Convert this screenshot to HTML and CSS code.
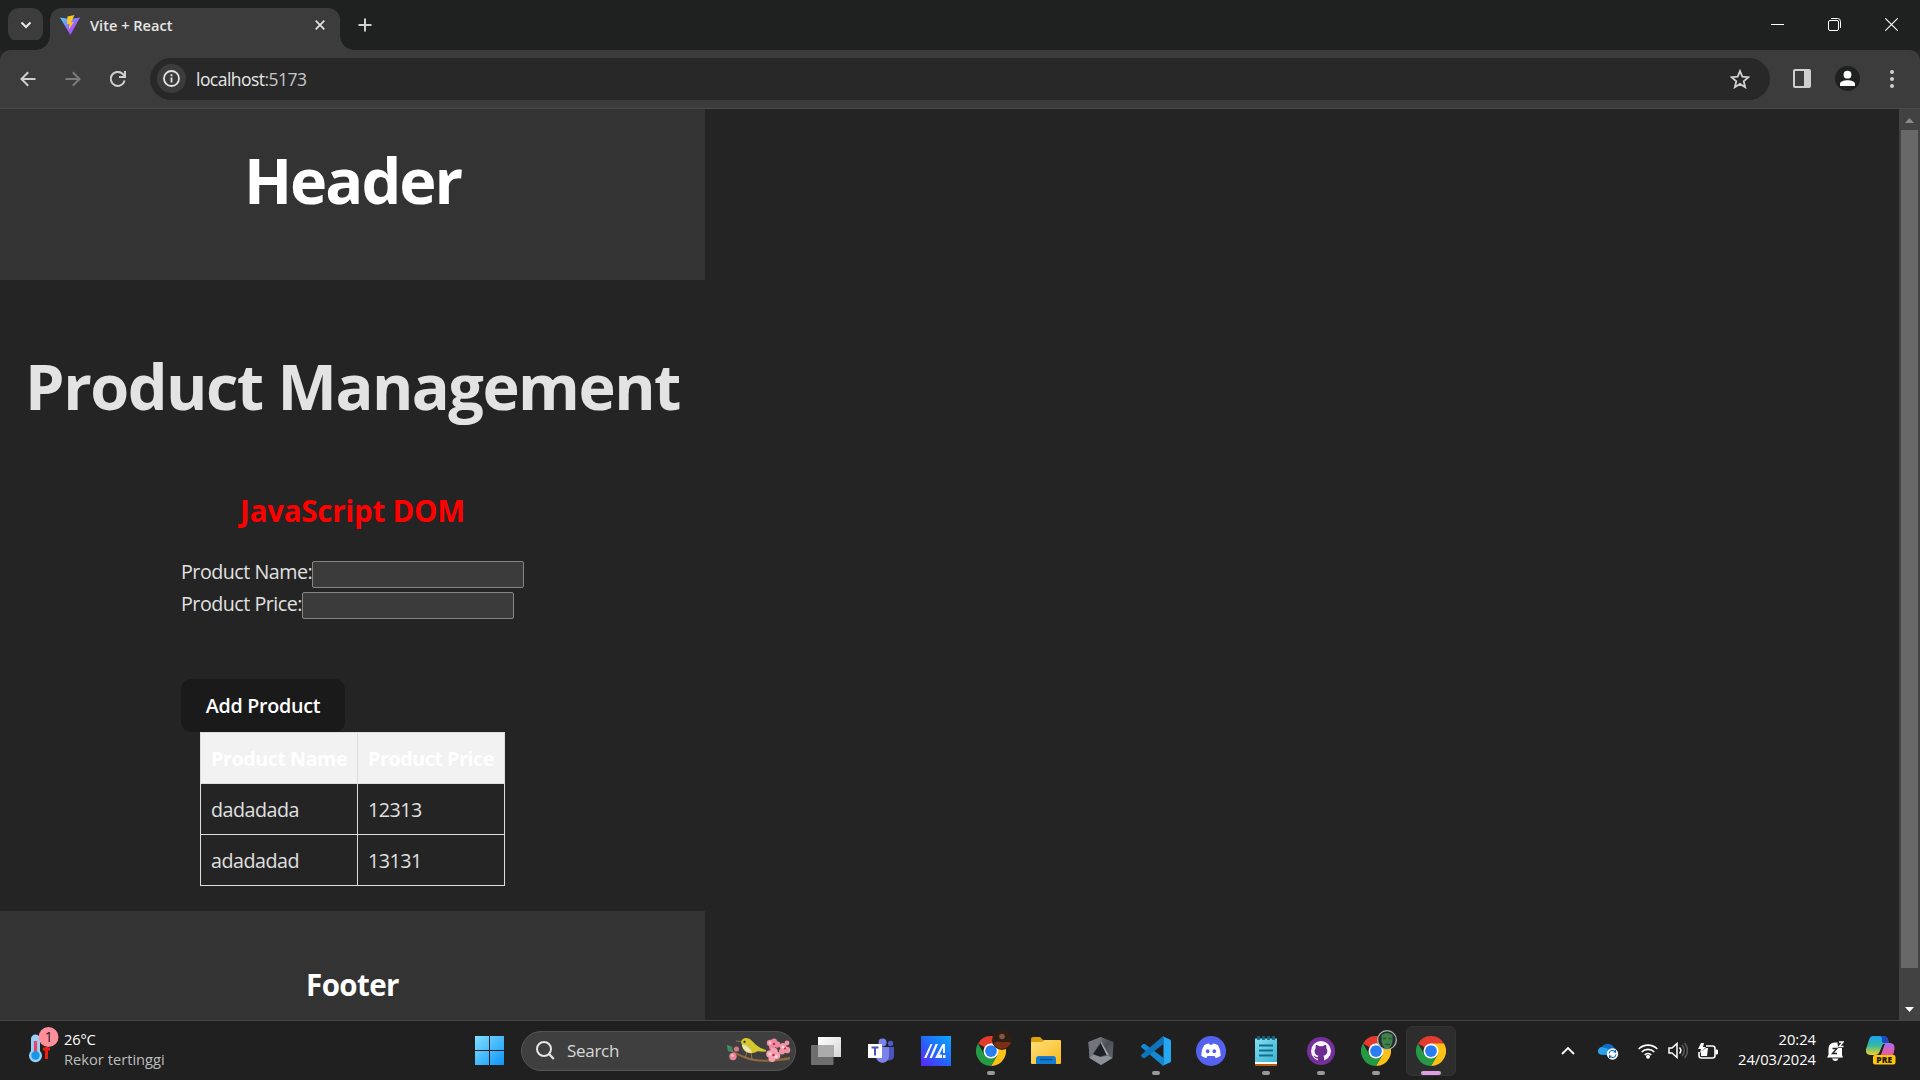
FILE: index.html
```html
<!DOCTYPE html>
<html lang="en">
<head>
<meta charset="utf-8">
<title>Vite + React</title>
<link rel="stylesheet" href="styles.css">
</head>
<body>
<svg class="defs" width="0" height="0">
  <defs>
    <linearGradient id="vite" x1="0" y1="0" x2="1" y2="1"><stop offset="0" stop-color="#41d1ff"/><stop offset=".6" stop-color="#a45cfc"/><stop offset="1" stop-color="#bd34fe"/></linearGradient>
    <linearGradient id="win" x1="0" y1="0" x2="1" y2="1"><stop offset="0" stop-color="#82e0ff"/><stop offset="1" stop-color="#0c94f8"/></linearGradient>
    <linearGradient id="asus" x1="0" y1="1" x2="1" y2="0"><stop offset="0" stop-color="#5a24ff"/><stop offset=".5" stop-color="#2268fa"/><stop offset="1" stop-color="#0ca8ff"/></linearGradient>
    <linearGradient id="folder" x1="0" y1="0" x2="1" y2="1"><stop offset="0" stop-color="#ffe07c"/><stop offset="1" stop-color="#fab91c"/></linearGradient>
    <linearGradient id="pad" x1="0" y1="0" x2="1" y2="1"><stop offset="0" stop-color="#83def2"/><stop offset="1" stop-color="#3cb2cf"/></linearGradient>
    <linearGradient id="hex" x1="0" y1="0" x2="1" y2="1"><stop offset="0" stop-color="#858b91"/><stop offset=".5" stop-color="#4a4f55"/><stop offset="1" stop-color="#6c7278"/></linearGradient>
    <linearGradient id="cop1" x1="0" y1="0" x2="0" y2="1"><stop offset="0" stop-color="#1ba2f5"/><stop offset=".5" stop-color="#35b9a0"/><stop offset="1" stop-color="#f2d326"/></linearGradient>
    <linearGradient id="cop2" x1="0" y1="0" x2="0" y2="1"><stop offset="0" stop-color="#ae6cf3"/><stop offset="1" stop-color="#f0598c"/></linearGradient>
    <linearGradient id="tv" x1="0" y1="0" x2="1" y2="1"><stop offset="0" stop-color="#fff"/><stop offset="1" stop-color="#d6d6d6"/></linearGradient>
    <symbol id="chrome" viewBox="0 0 48 48">
      <path fill="#e33b2e" d="M24 24 3.200 12A24 24 0 0 1 44.800 12Z"/>
      <path fill="#fbc116" d="M24 24V12h20.800A24 24 0 0 1 24 48L34.400 30Z"/>
      <path fill="#249a45" d="M24 24 34.400 30 24 48A24 24 0 0 1 3.200 12L13.600 30Z"/>
      <circle cx="24" cy="24" r="12" fill="#fff"/><circle cx="24" cy="24" r="9.400" fill="#2a7df0"/>
    </symbol>
  </defs>
</svg>

<div class="tabstrip">
  <div class="tab-search"><svg width="12" height="8" viewBox="0 0 12 8"><path d="M1.500 1.500 6 6l4.500-4.500" fill="none" stroke="#e8e8e8" stroke-width="2"/></svg></div>
  <div class="tab">
    <svg width="20" height="20" viewBox="0 0 20 20"><path d="M0 2.500 9.500 4 20 2.500 10.400 20Z" fill="url(#vite)"/><path d="M14.500 0 7.500 1.400 7 9h2.600l-.8 5.600L13.700 7l-2.700.3Z" fill="#ffc61e"/></svg>
    <span class="tab-title">Vite + React</span>
    <svg class="tab-close" width="10" height="10" viewBox="0 0 10 10"><path d="M.7.700l8.600 8.600M9.300.700.700 9.300" stroke="#e3e3e3" stroke-width="1.700"/></svg>
  </div>
  <svg class="new-tab" width="14" height="14" viewBox="0 0 14 14"><path d="M7 .5v13M.5 7h13" stroke="#d0d0d0" stroke-width="2"/></svg>
  <div class="window-buttons">
    <svg width="13" height="13" viewBox="0 0 13 13"><path d="M0 6.500h13" stroke="#fff"/></svg>
    <svg width="13" height="13" viewBox="0 0 13 13" fill="none" stroke="#fff"><rect x=".5" y="2.500" width="10" height="10" rx="1.500"/><path d="M3 .5h6.500a3 3 0 0 1 3 3V10"/></svg>
    <svg width="13" height="13" viewBox="0 0 13 13"><path d="M.3.300l12.400 12.400M12.700.300.300 12.700" stroke="#fff" stroke-width="1.100"/></svg>
  </div>
</div>

<div class="toolbar">
  <div class="nav">
    <svg width="16" height="16" viewBox="0 0 16 16" fill="none" stroke="#cfcfcf" stroke-width="2"><path d="M15.500 8H2M8.200 1.300 1.500 8l6.700 6.700"/></svg>
    <svg width="16" height="16" viewBox="0 0 16 16" fill="none" stroke="#7c7c7c" stroke-width="2"><path d="M.5 8H14M7.800 1.300 14.500 8l-6.700 6.700"/></svg>
    <svg width="16" height="16" viewBox="0 0 16 16" fill="none" stroke="#cfcfcf" stroke-width="2"><path d="M14.600 9.500A7 7 0 1 1 12.800 3L15 5.200"/><path d="M15 0v6H9"/></svg>
  </div>
  <div class="omnibox">
    <div class="site-info"><svg width="17" height="17" viewBox="0 0 17 17"><circle cx="8.500" cy="8.500" r="7.500" fill="none" stroke="#e3e3e3" stroke-width="1.800"/><path d="M8.500 7.500v5M8.500 4.300v2" stroke="#e3e3e3" stroke-width="1.800"/></svg></div>
    <span class="url">localhost<span class="port">:5173</span></span>
    <svg class="star" width="20" height="20" viewBox="0 0 20 20"><path d="m10 2 2.300 5.700 6.100.5-4.700 4 1.500 6-5.200-3.300-5.200 3.300 1.500-6-4.700-4 6.100-.5Z" fill="none" stroke="#d0d0d0" stroke-width="1.800"/></svg>
  </div>
  <svg class="panel" width="18" height="19" viewBox="0 0 18 19"><rect width="18" height="19" rx="2" fill="#cfcfcf"/><path d="M2 2h9v15H2z" fill="#3c3c3c"/></svg>
  <svg class="profile" width="25" height="25" viewBox="0 0 25 25"><circle cx="12.500" cy="12.500" r="12.500" fill="#1f2120"/><circle cx="12.500" cy="8.700" r="3.900" fill="#fff"/><path d="M5 20v-2c0-5 15-5 15 0v2Z" fill="#fff"/></svg>
  <svg class="menu" width="4" height="18" viewBox="0 0 4 18" fill="#cfcfcf"><circle cx="2" cy="2" r="2"/><circle cx="2" cy="9" r="2"/><circle cx="2" cy="16" r="2"/></svg>
</div>

<div class="viewport">
  <div class="page">
    <header class="site-header"><h1>Header</h1></header>
    <main>
      <h1 class="title">Product Management</h1>
      <section class="crud">
        <h2 class="subtitle">JavaScript DOM</h2>
        <div class="field"><label class="name-label" for="name">Product Name:</label><input id="name" type="text"></div>
        <div class="field second"><label class="price-label" for="price">Product Price:</label><input id="price" type="text"></div>
        <button class="add">Add Product</button>
        <table>
          <tr><th>Product Name</th><th>Product Price</th></tr>
          <tr><td>dadadada</td><td>12313</td></tr>
          <tr><td>adadadad</td><td>13131</td></tr>
        </table>
      </section>
    </main>
    <footer class="site-footer"><h2>Footer</h2></footer>
  </div>
  <div class="scrollbar">
    <svg width="9" height="5" viewBox="0 0 9 5"><path d="M0 5 4.500 0 9 5Z" fill="#8b8b8b"/></svg>
    <div class="thumb"></div>
    <svg width="9" height="5" viewBox="0 0 9 5"><path d="M0 0h9L4.500 5Z" fill="#fff"/></svg>
  </div>
</div>

<div class="taskbar">
  <div class="weather">
    <svg width="32" height="36" viewBox="0 0 32 36">
      <path d="M3 24V12a4.500 4.500 0 0 1 9 0v12a6.500 6.500 0 1 1-9 0" fill="#9bd0f6"/><path d="M7.500 14v14" stroke="#e64468" stroke-width="3.200"/><circle cx="7.500" cy="28.500" r="4.200" fill="#1797e6"/>
      <path d="M18.500 32V20M15 22h7" stroke="#f01c12" stroke-width="3" fill="none"/>
      <circle cx="20.500" cy="10" r="10" fill="#ff8f9d"/><text x="20.800" y="15" text-anchor="middle" font-size="14" fill="#251518">1</text>
    </svg>
    <div class="weather-text"><div class="temp">26°C</div><div>Rekor tertinggi</div></div>
  </div>
  <svg class="start" width="29" height="29" viewBox="0 0 29 29"><path d="M0 0h14v14H0zM15 0h14v14H15zM0 15h14v14H0zM15 15h14v14H15z" fill="url(#win)"/></svg>
  <div class="search">
    <svg width="19" height="19" viewBox="0 0 19 19" fill="none" stroke="#e6e6e6"><circle cx="8" cy="8" r="7" stroke-width="2"/><path d="m13 13 4.800 5" stroke-width="2.200"/></svg>
    <span class="search-label">Search</span>
    <svg class="bird" width="65" height="25" viewBox="0 0 65 25">
      <path d="M5 12c8 4 14 7 24 9 12 2 22 0 35-2v2.500c-12 2-24 3-36 1.500C18 21 11 17 4 13Z" fill="#94683f"/>
      <path d="M1 7l5 2 1 5-5-1ZM0 12l4-2" fill="#4c9b6d"/><circle cx="4" cy="11" r="2.200" fill="#3b8a5a"/><circle cx="7" cy="18.500" r="3.700" fill="#ec8297"/><circle cx="10.500" cy="11" r="2.600" fill="#d8768d"/><circle cx="6.500" cy="17.500" r="1.600" fill="#f9b9c3"/>
      <path d="M16 3.700 10 3M25 14l1 7M21 14l-2 6" stroke="#8a7450" fill="none"/>
      <path d="M15 4c1-5 8-5 11-1 4 4 7 7 14 9v1.500c-4 .5-7-.5-9 0-5 3-12 2-14-3-1-2-1-4-2-6.500Z" fill="#d6c72e"/><path d="M16 7c3-1 8 3 10 7.500-5 .5-9-2.500-10-7.500Z" fill="#e7e3bd"/><circle cx="18.500" cy="3.800" r="1.100" fill="#2c281c"/>
      <g fill="#f08ba0"><circle cx="44" cy="5" r="3.200"/><circle cx="48" cy="3.500" r="3"/><circle cx="51" cy="6.500" r="3.200"/><circle cx="46" cy="9" r="3"/></g>
      <g fill="#f5a0b0"><circle cx="44" cy="16" r="3.800"/><circle cx="48" cy="13.500" r="3.800"/><circle cx="50.500" cy="17.500" r="3.800"/><circle cx="46" cy="20.500" r="3.500"/></g>
      <g fill="#f293a6"><circle cx="57" cy="8.500" r="3.400"/><circle cx="61" cy="5" r="2.400"/><circle cx="61" cy="12" r="3.300"/><circle cx="56" cy="13.500" r="3"/></g>
      <g fill="#ffd1d6"><circle cx="44" cy="5" r="1.400"/><circle cx="57" cy="9" r="1.500"/><circle cx="50" cy="18.500" r="1.800"/><circle cx="44" cy="16" r="1.600"/></g><g fill="#bd2f52"><circle cx="48" cy="6" r="1.200"/><circle cx="47.500" cy="17" r="1.300"/><circle cx="59" cy="10.500" r="1.100"/></g>
    </svg>
  </div>
  <div class="apps">
    <div class="app"><svg width="30" height="28" viewBox="0 0 30 28"><path d="M9 0h20a1 1 0 0 1 1 1v19H7V0Z" fill="url(#tv)"/><rect y="8" width="22.500" height="20" rx="1" fill="#6e6e6e"/><path d="M7 8h15.500v12H7z" fill="#ababab"/></svg></div>
    <div class="app"><svg width="26" height="26" viewBox="0 0 26 26"><circle cx="22.500" cy="5.500" r="2.700" fill="#5059c9"/><path d="M17 9h9v9c0 4-5 6-9 3Z" fill="#4b53bc"/><circle cx="14.500" cy="4.500" r="4" fill="#7b83eb"/><path d="M8 9h13v9c0 9-13 9-13 0Z" fill="#7b83eb"/><rect y="6" width="14" height="14" fill="#fff"/><path d="M3.500 9.500h7M7 9.500v8" stroke="#4b53bc" stroke-width="2"/></svg></div>
    <div class="app"><svg width="30" height="30" viewBox="0 0 30 30"><path d="M0 0h30v30H0z" fill="url(#asus)"/><path d="M3 22 9.500 8h2L5.500 22ZM8.500 22 14.500 8h2.500L11 22ZM14 22l7.500-14H24v9h-2v-5.500L16.500 22ZM18.500 18.500H21V22h-4.500ZM22 19h2.500v3H22Z" fill="#f0f7ff"/></svg></div>
    <div class="app"><svg width="30" height="30"><use href="#chrome"/></svg>
      <svg class="badge" width="20" height="20" viewBox="0 0 20 20"><circle cx="10" cy="10" r="10" fill="#2e1f14"/><path d="M1.500 14c2-3 5-3 8-2s6-1 9.500 1a10 10 0 0 1-17.500 1" fill="#7c2f14"/><circle cx="10" cy="6.500" r="2.800" fill="#7d5a43"/></svg><i class="dot"></i></div>
    <div class="app"><svg width="30" height="28" viewBox="0 0 30 28"><path d="M0 10V2q0-2 2-2h7l3 3h15v7Z" fill="#dfa00c"/><path d="M0 6q0-1 1-1h10l3-2h15q1 0 1 1v22q0 1-1 1H1q-1 0-1-1Z" fill="url(#folder)"/><path d="M5 27v-5q0-3 3-3h14q3 0 3 3v5Z" fill="#147cd0"/><path d="M9 22.500h12" stroke="#0c4f91" stroke-width="1.500"/></svg></div>
    <div class="app"><svg width="26" height="28" viewBox="0 0 26 28"><path d="m13 0 12.500 5-1 16L13 28 1.500 21l-1-16Z" fill="url(#hex)"/><path d="M.5 5 13 0v4L5 17l-3.500 4Z" fill="#6f757b"/><path d="M5 17.500 13 20l7-1.500 4.500 2.500L13 28 1.500 21Z" fill="#8b9197"/><path d="M13.500 5 19.500 17.500 12 19.500 5 17Z" fill="#1d2024"/><path d="m13 4 8 14.500-2.500-.8L13 6.500Z" fill="#a6acb2"/></svg></div>
    <div class="app"><svg width="30" height="30" viewBox="0 0 30 30"><path d="M2 8 0 10v1l21 18 1.500 1V22L4 8Z" fill="#1489d3"/><path d="M0 19v1l2 2h2L22.500 8V0L21 1Z" fill="#0e75bc"/><path d="M21 0 29 3.500q1 .5 1 1.500v20q0 1-1 1.500L21 30q1.500-.5 1.500-2V2q0-1.500-1.500-2Z" fill="#25a7f2"/></svg><i class="dot"></i></div>
    <div class="app"><svg width="30" height="30" viewBox="0 0 30 30"><circle cx="15" cy="15" r="15" fill="#5562f0"/><path d="M8 9.300q2.500-1.500 5-1.800l.7 1.300h2.600l.7-1.300q2.500.3 5 1.800 3 5 2.700 10.500-2.500 1.800-5 2.200l-1.200-2h-7l-1.200 2q-2.500-.4-5-2.200Q5 14.300 8 9.300Z" fill="#fff"/><ellipse cx="11.700" cy="15.300" rx="1.800" ry="2" fill="#5562f0"/><ellipse cx="18.300" cy="15.300" rx="1.800" ry="2" fill="#5562f0"/></svg></div>
    <div class="app"><svg width="22" height="30" viewBox="0 0 22 30"><rect y="26" width="22" height="4" rx="1" fill="#b35c12"/><path d="M0 25h22v3H0z" fill="#fff"/><path d="M0 2.500h22V26H0z" fill="url(#pad)"/><path d="M3.500 0v4M8.500 0v4M13.500 0v4M18.500 0v4" stroke="#11698c" stroke-width="2.600"/><path d="M4 9.500h14M4 14.500h14M4 19.500h14" stroke="#0f6f92" stroke-width="1.800"/></svg><i class="dot"></i></div>
    <div class="app"><svg width="28" height="28" viewBox="0 0 28 28"><circle cx="14" cy="14" r="14" fill="#75309b"/><circle cx="14" cy="14" r="10" fill="#f8f4fb"/><path d="M9 8c1.500 0 2.500.7 3.300 1.200h3.400C16.500 8.700 17.500 8 19 8c.5 1.300.4 2.300.2 3 2.300 3 1 7.400-3 7.800.7.700.8 1.500.8 2.200V24h-6v-2.500c-3 .5-3.600-2-5-2.700 2.200-.4 2.700 2 5 1.200 0-.5.2-.8.700-1.200-4-.4-5.200-4.800-2.900-7.800-.3-.9-.3-1.800.2-3Z" fill="#6c2b91"/></svg><i class="dot"></i></div>
    <div class="app"><svg width="30" height="30"><use href="#chrome"/></svg>
      <svg class="badge" width="20" height="20" viewBox="0 0 20 20"><circle cx="10" cy="10" r="10" fill="#a9b8b5"/><circle cx="10" cy="10" r="8.700" fill="#222e2c"/><path d="M4.500 5q5.500-4 11 0v7q-2 7-5.500 7t-5.500-7Z" fill="#42804b"/><path d="M6 8.500h3M11.500 8.500h3M8 14.500h5" stroke="#24552f" stroke-width="1.300"/></svg><i class="dot"></i></div>
    <div class="app active"><svg width="30" height="30"><use href="#chrome"/></svg><i class="dot"></i></div>
  </div>
  <div class="tray">
    <svg width="14" height="9" viewBox="0 0 14 9"><path d="M1 8l6-6 6 6" fill="none" stroke="#fff" stroke-width="1.800"/></svg>
    <svg class="cloud" width="21" height="18" viewBox="0 0 21 18"><path d="M3.500 13a4 4 0 0 1 0-7.500 7 7 0 0 1 12.500 0 4 4 0 0 1 0 7.500Z" fill="#0f6cc4"/><path d="M2 12.500A3.900 3.900 0 0 1 6 5.700c4 0 6 3 10 7.300Z" fill="#2aa1ea"/><circle cx="14.500" cy="12" r="5.700" fill="#fff"/><path d="M11 11.500a3.600 3.600 0 0 1 6.500-1.500V8m0 2h-2M18 12.500A3.600 3.600 0 0 1 11.500 14v2m0-2h2" stroke="#1266b3" stroke-width="1.100" fill="none"/></svg>
    <svg class="wifi" width="20" height="16" viewBox="0 0 20 16" fill="none" stroke="#fff" stroke-width="1.600"><path d="M.7 6a13 13 0 0 1 18.600 0M3.700 9a8.800 8.800 0 0 1 12.600 0M6.700 12a4.700 4.700 0 0 1 6.600 0"/><circle cx="10" cy="13.700" r="1.200" fill="#fff"/></svg>
    <svg class="speaker" width="20" height="17" viewBox="0 0 20 17" fill="none" stroke="#fff" stroke-width="1.500"><path d="M1 6h3l5-4.500v14L4 11H1Z"/><path d="M11.500 5.500a4.500 4.500 0 0 1 0 6"/><path d="M14 3a8 8 0 0 1 0 11M16.500 1a11 11 0 0 1 0 15" stroke="#5a5a5a"/></svg>
    <svg class="battery" width="20" height="16" viewBox="0 0 20 16"><path d="M8 3h6.500q2.500 0 2.500 2.500v7q0 2.500-2.500 2.500h-11Q1 15 1 12.500V9" fill="none" stroke="#fff" stroke-width="1.600"/><path d="M18 7h1.500v4H18z" fill="#fff" stroke="#fff"/><path d="M3 13V9l5-4h2l-1 8ZM3 0 0 6h3L2 10l6-6H5l1-4Z" fill="#fff"/></svg>
    <div class="clock"><div>20:24</div><div>24/03/2024</div></div>
    <svg class="bell" width="17" height="20" viewBox="0 0 17 20"><path d="M1.500 14V8q0-6.500 6.500-6.500h2.500L11 7h4v7l1 2.500H0Z" fill="#fff"/><path d="M5 17.500h6.500q-1 2.500-3.200 2.500T5 17.500Z" fill="#fff"/><path d="M5.500 7.500h4.300L5.500 12.500H10" fill="none" stroke="#222" stroke-width="1.400"/><path d="M12 1h4l-3.800 4.500h4.300" fill="none" stroke="#fff" stroke-width="1.400"/></svg>
    <svg class="copilot" width="30" height="29" viewBox="0 0 30 29"><path d="M7 0h10q4 0 5 4l1 4h-6l-4 9q-1 2-4 2H5q-6 0-5-6L3 4Q4 0 7 0Z" fill="url(#cop1)"/><path d="M14 0h3q4 0 5 4l1 3h-5q-3 0-2-4 0-2-2-3Z" fill="#2048c4"/><path d="M21 7h3q5 0 4.500 6L27 20H12q3 0 4-4l2-6q1-3 3-3Z" fill="url(#cop2)"/><rect x="7" y="19" width="22.500" height="9.500" rx="2" fill="#ffc60a"/><text x="18.200" y="26.800" text-anchor="middle" font-size="8.500" font-weight="800" fill="#1d1a10">PRE</text></svg>
  </div>
</div>
</body>
</html>
```
FILE: styles.css
```css
* { box-sizing: border-box; }
body {
  margin: 0;
  width: 1920px;
  height: 1080px;
  overflow: hidden;
  display: flex;
  flex-direction: column;
  background: #242424;
  color: #e0e0e0;
  font-family: "Open Sans", "Noto Sans", sans-serif;
}
svg { display: block; flex: none; }
.defs { position: absolute; }
span, label, th, td { white-space: nowrap; }

/* Tab strip */
.tabstrip { height: 50px; flex: none; display: flex; align-items: flex-start; background: #1f2120; padding: 8px 0 0 8px; }
.tab-search { width: 35px; height: 34px; border-radius: 11px; background: #3c3c3c; display: grid; place-items: center; }
.tab { position: relative; margin-left: 7px; width: 290px; height: 42px; border-radius: 12px 12px 0 0; background: #3c3c3c; display: flex; align-items: center; padding: 0 15px 8px 10px; }
.tab::before, .tab::after { content: ""; position: absolute; bottom: 0; width: 14px; height: 14px; }
.tab::before { left: -14px; background: radial-gradient(circle at 0 0, transparent 13.5px, #3c3c3c 14px); }
.tab::after { right: -14px; background: radial-gradient(circle at 100% 0, transparent 13.5px, #3c3c3c 14px); }
.tab-title { margin-left: 10px; font-size: 14.6px; font-weight: 600; color: #e6e6e6; }
.tab-close { margin-left: auto; }
.new-tab { margin: 10px 0 0 18px; }
.window-buttons { margin: 10px 22px 0 auto; display: flex; gap: 44px; }

/* Toolbar */
.toolbar { height: 59px; flex: none; display: flex; align-items: center; padding: 0 26px 1px 20px; background: #3c3c3c; border-bottom: 1px solid #4a4a4a; box-shadow: 0 -12px 0 -2px #1f2120; border-radius: 10px 10px 0 0; }
.nav { display: flex; gap: 29px; width: 130px; }
.omnibox { flex: 1; height: 42px; border-radius: 21px; background: #282828; display: flex; align-items: center; padding: 0 20px 0 7px; }
.site-info { width: 29px; height: 29px; border-radius: 50%; background: #3c3c3c; display: grid; place-items: center; }
.url { margin-left: 10px; font-size: 17.5px; letter-spacing: -.54px; color: #e6e6e6; }
.port { color: #c7c7c7; }
.star { margin-left: auto; }
.panel { margin-left: 23px; }
.profile { margin-left: 24px; }
.menu { margin-left: 30px; }

/* Web page */
.viewport { flex: 1; min-height: 0; overflow: hidden; display: flex; justify-content: space-between; background: #242424; }
.page { width: 705px; height: 911px; overflow: hidden; }
h1, h2 { margin: 0; }
.site-header { height: 171px; padding-top: 29px; background: #333; color: #fff; text-align: center; }
h1 { font-size: 63px; line-height: 83px; font-weight: 700; letter-spacing: -2px; }
.title { margin-top: 64px; text-align: center; color: #e3e3e3; letter-spacing: -1.52px; }
.crud { width: 343px; margin: 64px auto 0; }
.subtitle { font-size: 29.5px; line-height: 40px; letter-spacing: -.25px; text-align: center; color: #f00; }
.field { display: flex; align-items: flex-start; height: 31px; margin-top: 30px; font-size: 19.7px; line-height: 22px; letter-spacing: -.5px; }
.field.second { margin-top: 0; }
.field label { flex: none; }
.name-label { width: 131px; }
.price-label { width: 121px; }
.field.second label { padding-top: 1px; }
.field input { width: 212px; height: 27px; border: 1px solid #858585; border-radius: 2px; background: #3b3b3b; outline: none; padding: 0; }
.add { display: block; margin-top: 56px; width: 164px; height: 53px; padding: 1px 0 0; border: 0; border-radius: 10px; background: #1a1a1a; color: #fff; font: 600 19.7px/52px "Open Sans", sans-serif; letter-spacing: -.3px; }
table { margin-left: 19px; width: 305px; border-collapse: collapse; table-layout: fixed; font-size: 19.7px; line-height: 28px; letter-spacing: -.5px; }
th, td { height: 51px; border: 1px solid #ddd; padding: 2px 0 0 10px; text-align: left; }
th:first-child { width: 157px; }
th { background: #f2f2f2; color: #fff; letter-spacing: -.45px; }
.site-footer { margin-top: 25px; height: 109px; padding-top: 54px; background: #333; color: #fff; text-align: center; }
.site-footer h2 { font-size: 29.5px; line-height: 40px; letter-spacing: -.6px; }
.scrollbar { width: 21px; background: #424242; display: flex; flex-direction: column; align-items: center; padding: 9px 0 8px; }
.thumb { width: 17px; height: 838px; margin-top: 7px; background: #686868; }
.scrollbar svg:last-child { margin-top: auto; }

/* Taskbar */
.taskbar { height: 60px; flex: none; display: flex; align-items: center; background: #202020; border-top: 1px solid #444; }
.weather { width: 447px; margin-left: 28px; display: flex; gap: 4px; align-items: center; }
.weather > svg { margin-bottom: 11px; }
.weather-text { margin-bottom: 4px; font-size: 14.7px; line-height: 20px; color: #bdbdbd; }
.temp { color: #fff; letter-spacing: -.2px; }
.search { width: 275px; height: 40px; margin-left: 17px; border: 1px solid #555; border-radius: 20px; background: #3f3f3f; display: flex; align-items: center; padding: 0 4px 0 14px; }
.search-label { margin-left: 12px; font-size: 17px; letter-spacing: -.3px; color: #d8d8d8; }
.bird { margin-left: auto; }
.apps { display: flex; margin-left: 2.5px; }
.app { position: relative; width: 55px; height: 50px; display: grid; place-items: center; }
.app.active::before { content: ""; position: absolute; inset: 0 2.5px; border-radius: 6px; background: #2d2d2d; border: 1px solid #333; }
.app > svg { position: relative; }
.app > .badge { position: absolute; left: 28px; top: 4px; }
.dot { position: absolute; bottom: 1px; left: 23.5px; width: 8px; height: 4px; border-radius: 2px; background: #999; }
.active .dot { width: 20px; left: 17.5px; background: #dba0e3; }
.tray { margin-left: auto; display: flex; align-items: center; padding-right: 24px; }
.cloud { margin-left: 23px; }
.wifi { margin-left: 19px; }
.speaker, .battery { margin-left: 10px; }
.clock { width: 98px; margin-bottom: 4px; text-align: right; font-size: 14.7px; line-height: 20px; color: #fff; }
.bell { margin-left: 11px; }
.copilot { margin-left: 22px; }
```
